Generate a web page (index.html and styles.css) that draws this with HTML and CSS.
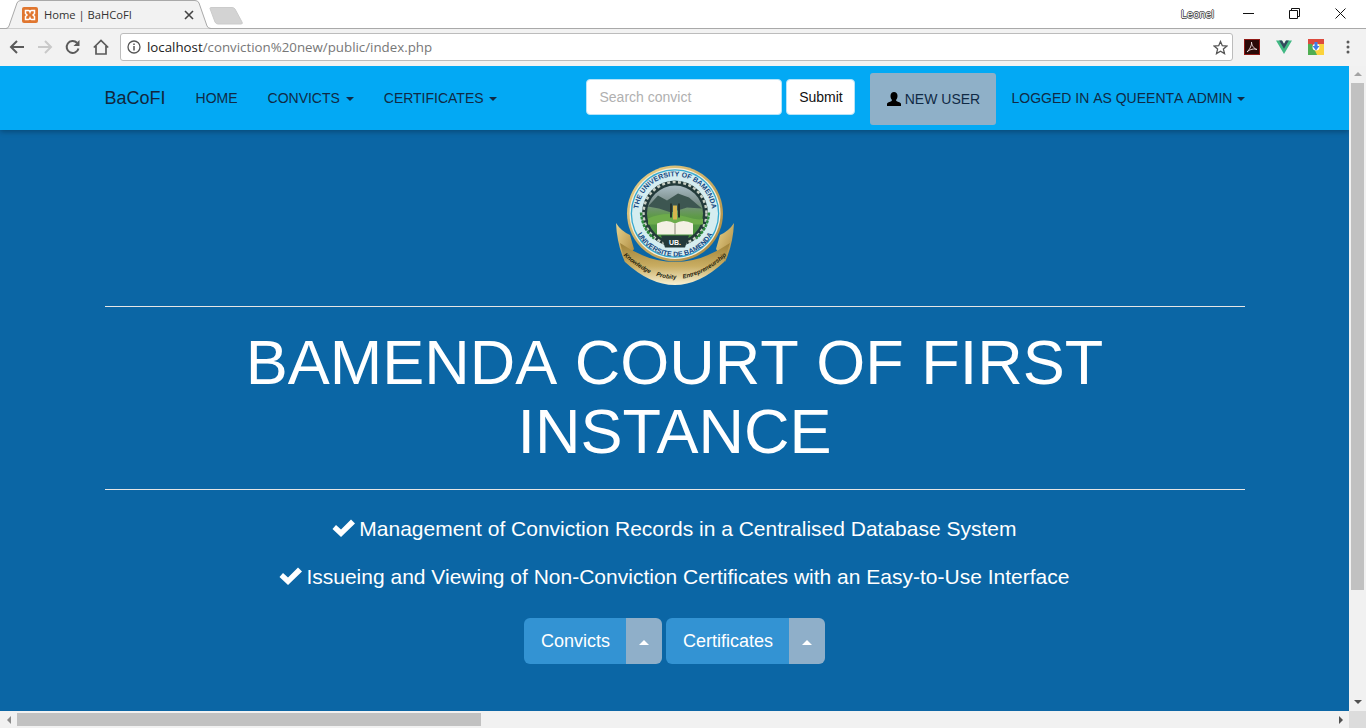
FILE: index.html
```html
<!DOCTYPE html>
<html lang="en">
<head>
  <meta charset="UTF-8" />
  <title>Home | BaHCoFI</title>
  <link rel="stylesheet" href="styles.css">
</head>
<body>
  <!-- Browser tab strip -->
  <div class="tabstrip">
    <div class="tab">
      <svg class="tab-shape" width="212" height="30" viewBox="0 0 212 30">
        <path d="M0 28.500H6Q8 28.500 9 26L17 3Q18 .5 21 .5H195Q198 .5 199 3L207 26Q208 28.500 211 28.500" fill="#f2f2f2" stroke="#a9a9a9"/>
      </svg>
      <svg class="favicon" width="16" height="16" viewBox="0 0 16 16">
        <rect width="16" height="16" rx="2" fill="#e0762f"/>
        <path d="M3.500 3.500H6.500Q7.500 3.500 8 5Q8.500 3.500 9.500 3.500H12.500V6.500L11 8L12.500 9.500V12.500H9.500Q8.500 12.500 8 11Q7.500 12.500 6.500 12.500H3.500V9.500L5 8L3.500 6.500Z" fill="none" stroke="#fff" stroke-width="1.500"/>
      </svg>
      <span class="tab-title">Home | BaHCoFI</span>
      <svg class="tab-close" width="10" height="10" viewBox="0 0 10 10">
        <path d="M1 1L9 9M9 1L1 9" stroke="#444" stroke-width="1.600"/>
      </svg>
    </div>
    <svg class="new-tab" width="36" height="18" viewBox="0 0 36 18">
      <path d="M2 1.500Q2 .5 3 .5H24Q26 .5 27 2L34 15Q35 17 33 17H10Q8 17 7 15Z" fill="#d3d3d3" stroke="#cbcbcb"/>
    </svg>
    <span class="profile">Leonel</span>
    <div class="win-controls">
      <svg width="11" height="11" viewBox="0 0 11 11"><path d="M0 5.500H11" stroke="#111"/></svg>
      <svg width="11" height="11" viewBox="0 0 11 11"><path d="M.5 2.500H8.500V10.500H.5ZM2.500 2.500V.5H10.500V8.500H8.500" fill="none" stroke="#111"/></svg>
      <svg width="11" height="11" viewBox="0 0 11 11"><path d="M.5 .5L10.500 10.500M10.500 .5L.5 10.500" stroke="#111"/></svg>
    </div>
  </div>

  <!-- Browser toolbar -->
  <div class="toolbar">
    <svg class="tool" width="16" height="16" viewBox="0 0 16 16"><path d="M15 8H2.500M8 2L2 8L8 14" fill="none" stroke="#5a5a5a" stroke-width="2"/></svg>
    <svg class="tool" width="16" height="16" viewBox="0 0 16 16"><path d="M1 8H13.500M8 2L14 8L8 14" fill="none" stroke="#c9c9c9" stroke-width="2"/></svg>
    <svg class="tool" width="16" height="16" viewBox="0 0 16 16"><path d="M13.500 9.500A6 6 0 1 1 12 3.800" fill="none" stroke="#5a5a5a" stroke-width="2"/><path d="M14.500 1V7H8.500Z" fill="#5a5a5a"/></svg>
    <svg class="tool" width="16" height="16" viewBox="0 0 16 16"><path d="M.8 8.500L8 1.500L15.200 8.500M3 7V15H13V7" fill="none" stroke="#5a5a5a" stroke-width="1.700"/></svg>
    <div class="omnibox">
      <svg width="14" height="14" viewBox="0 0 14 14"><circle cx="7" cy="7" r="6" fill="none" stroke="#555" stroke-width="1.300"/><path d="M7 6V10.500M7 3.500V5" stroke="#555" stroke-width="1.500"/></svg>
      <span class="url"><b>localhost</b>/conviction%20new/public/index.php</span>
      <svg class="star" width="15" height="15" viewBox="0 0 15 15"><path d="M7.500 1.500L9.300 5.700L13.900 6.100L10.400 9.100L11.500 13.600L7.500 11.200L3.500 13.600L4.600 9.100L1.100 6.100L5.700 5.700Z" fill="none" stroke="#555" stroke-width="1.300"/></svg>
    </div>
    <div class="extensions">
      <svg width="16" height="16" viewBox="0 0 16 16"><rect x=".5" y=".5" width="15" height="15" fill="#2a0a08" stroke="#8f1a16"/><path d="M3 13C6 10 8 6 7.500 3C7.500 6 10 10 13 10.500C10 9.500 6 10 3 13Z" fill="none" stroke="#e8d8d8"/></svg>
      <svg width="16" height="16" viewBox="0 0 16 16"><path d="M0 1.500H6L8 5L10 1.500H16L8 15Z" fill="#41b883"/><path d="M3.200 1.500H6L8 5L10 1.500H12.800L8 9.800Z" fill="#35495e"/></svg>
      <svg width="16" height="16" viewBox="0 0 16 16"><rect width="16" height="16" fill="#fbd33c"/><path d="M0 0H16V5H8L4 12L0 9Z" fill="#dd4b3e"/><path d="M0 5L4 5L9 16H0Z" fill="#4fae52"/><circle cx="8" cy="8" r="3.500" fill="#fff"/><path d="M6.500 3H9.500V7H11.500L8 11.500L4.500 7H6.500Z" fill="#3f7fe8"/></svg>
    </div>
    <svg class="menu-dots" width="4" height="14" viewBox="0 0 4 14"><circle cx="2" cy="2" r="1.500" fill="#5a5a5a"/><circle cx="2" cy="7" r="1.500" fill="#5a5a5a"/><circle cx="2" cy="12" r="1.500" fill="#5a5a5a"/></svg>
  </div>

  <div class="viewport">
    <div class="viewport-row">
      <div class="page">
        <nav class="navbar">
          <div class="container nav-inner">
            <a class="brand">BaCoFI</a>
            <a class="nav-link">HOME</a>
            <a class="nav-link">CONVICTS <span class="caret"></span></a>
            <a class="nav-link">CERTIFICATES <span class="caret"></span></a>
            <form class="search">
              <input class="search-input" type="text" placeholder="Search convict">
              <button class="search-btn" type="button">Submit</button>
            </form>
            <a class="new-user">
              <svg width="14" height="14" viewBox="0 0 14 14"><path d="M0 14V11.800C0 10.500 2.800 9.800 4.600 8.900C5 8.600 5 8 4.700 7.500C3.800 6.500 3.500 5.200 3.500 3.800C3.500 1.300 5 0 7 0C9 0 10.500 1.300 10.500 3.800C10.500 5.200 10.200 6.500 9.300 7.500C9 8 9 8.600 9.400 8.900C11.200 9.800 14 10.500 14 11.800V14Z" fill="#000"/></svg>
              NEW USER
            </a>
            <a class="nav-link user-menu">LOGGED IN AS QUEENTA ADMIN <span class="caret"></span></a>
          </div>
        </nav>

        <main class="container hero">
          <svg class="logo" width="120" height="120" viewBox="0 0 120 120">
            <defs>
              <linearGradient id="gold" x1="0" x2="0" y1="0" y2="1">
                <stop offset="0" stop-color="#a08238"/>
                <stop offset=".55" stop-color="#c9ad62"/>
                <stop offset="1" stop-color="#f7f1d4"/>
              </linearGradient>
              <linearGradient id="goldRim" x1="0" x2="1" y1="0" y2="1">
                <stop offset="0" stop-color="#e9d48e"/>
                <stop offset="1" stop-color="#a9853a"/>
              </linearGradient>
              <linearGradient id="meadow" x1="0" x2="0" y1="0" y2="1">
                <stop offset="0" stop-color="#a9bcc4"/>
                <stop offset=".3" stop-color="#7c8f8c"/>
                <stop offset=".55" stop-color="#5e9a48"/>
                <stop offset="1" stop-color="#3f8f3a"/>
              </linearGradient>
              <path id="arcTop" d="M27 65A37 37 0 1 1 93 65"/>
              <path id="arcBottom" d="M19.500 34A43 43 0 1 0 100.500 34"/>
              <path id="arcMotto" d="M8 90Q60 138 112 90"/>
            </defs>
            <!-- ribbon tails -->
            <path d="M1 58Q6 66 15 70L19 84L10 97Q2 80 1 58Z" fill="url(#goldRim)"/>
            <path d="M119 58Q114 66 105 70L101 84L110 97Q118 80 119 58Z" fill="url(#goldRim)"/>
            <!-- crest rings -->
            <circle cx="60" cy="48.500" r="48" fill="url(#goldRim)"/>
            <circle cx="60" cy="48.500" r="45.500" fill="#f1efe0"/>
            <circle cx="60" cy="48.500" r="44.300" fill="#35a9cf"/>
            <circle cx="60" cy="48.500" r="43" fill="#d5edf0"/>
            <g transform="translate(0 1.500)">
              <circle cx="60" cy="47" r="33" fill="#233a3a"/>
              <circle cx="60" cy="47" r="31.500" fill="none" stroke="#c8cfc4" stroke-width="2.500" stroke-dasharray="3 2.400"/>
              <circle cx="60" cy="47" r="28" fill="url(#meadow)"/>
              <path d="M33 40L43 29L52 34L63 27L74 31L87 42L72 41L56 46L44 42Z" fill="#3d5651"/>
              <path d="M33 52Q50 44 70 50T88 50V58H33Z" fill="#6dac4b"/>
              <!-- laurel -->
              <path d="M26 46Q27 62 39 72" fill="none" stroke="#2e8a3c" stroke-width="2.400" stroke-dasharray="3 1"/>
              <path d="M94 46Q93 62 81 72" fill="none" stroke="#2e8a3c" stroke-width="2.400" stroke-dasharray="3 1"/>
              <!-- torch and book -->
              <rect x="55" y="37" width="2" height="14" fill="#26332c"/>
              <rect x="63" y="37" width="2" height="14" fill="#26332c"/>
              <rect x="58" y="39" width="4" height="14" fill="#d8b64f"/>
              <path d="M42 57Q52 52 60 57Q68 52 78 57V68H42Z" fill="#f4f1e4"/>
              <path d="M60 57V68" stroke="#8a8a78"/>
              <path d="M46 69H74L70 81H50Z" fill="#233a3a"/>
              <text class="logo-ur" x="60" y="78" text-anchor="middle">UB.</text>
            </g>
            <text class="logo-ring"><textPath href="#arcTop" startOffset="50%" text-anchor="middle">THE UNIVERSITY OF BAMENDA</textPath></text>
            <text class="logo-ring"><textPath href="#arcBottom" startOffset="50%" text-anchor="middle">UNIVERSITE DE BAMENDA</textPath></text>
            <!-- motto ribbon -->
            <path d="M5 78Q60 116 115 78L109 97Q60 143 10 97Z" fill="url(#gold)"/>
            <text class="logo-motto"><textPath href="#arcMotto" startOffset="50%" text-anchor="middle">Knowledge Probity Entrepreneurship</textPath></text>
          </svg>
          <hr class="rule">
          <h1 class="title"><span class="title-line">BAMENDA COURT OF FIRST</span> INSTANCE</h1>
          <hr class="rule">
          <p class="feature">
            <svg class="check" width="23" height="18" viewBox="0 0 23 18"><path d="M.5 10L4 6L9 10.500L19 .5L23 4.500L9 18Z" fill="#fff"/></svg>
            Management of Conviction Records in a Centralised Database System
          </p>
          <p class="feature">
            <svg class="check" width="23" height="18" viewBox="0 0 23 18"><path d="M.5 10L4 6L9 10.500L19 .5L23 4.500L9 18Z" fill="#fff"/></svg>
            Issueing and Viewing of Non-Conviction Certificates with an Easy-to-Use Interface
          </p>
          <div class="actions">
            <div class="split">
              <a class="split-main">Convicts</a>
              <a class="split-toggle"><span class="caret-up"></span></a>
            </div>
            <div class="split">
              <a class="split-main">Certificates</a>
              <a class="split-toggle"><span class="caret-up"></span></a>
            </div>
          </div>
        </main>
      </div>

      <div class="vscroll">
        <span class="arrow arrow-up"></span>
        <div class="vscroll-track"><div class="vscroll-thumb"></div></div>
        <span class="arrow arrow-down"></span>
      </div>
    </div>

    <div class="hscroll">
      <span class="hscroll-end"><span class="arrow arrow-left"></span></span>
      <div class="hscroll-thumb"></div>
      <span class="hscroll-end hscroll-right"><span class="arrow arrow-right"></span></span>
      <div class="scroll-corner"></div>
    </div>
  </div>
</body>
</html>
```

FILE: styles.css
```css
* {
  box-sizing: border-box;
}

html, body {
  margin: 0;
  height: 728px;
  overflow: hidden;
}

body {
  font-family: "Liberation Sans", Arial, sans-serif;
  display: flex;
  flex-direction: column;
  background: #fff;
}

/* Browser chrome */
.tabstrip {
  height: 29px;
  flex: none;
  display: flex;
  background: #fff;
  border-bottom: 1px solid #a9a9a9;
  position: relative;
}

.tab {
  width: 212px;
  height: 29px;
  display: flex;
  align-items: center;
  padding: 0 16px 0 22px;
  position: relative;
  flex: none;
}

.tab-shape {
  position: absolute;
  left: 0;
  top: 0;
}

.favicon,
.tab-title,
.tab-close {
  position: relative;
}

.tab-title {
  font-family: "Open Sans", sans-serif;
  font-size: 11.200px;
  color: #333;
  margin-left: 6px;
  flex: 1;
}

.tab-close {
  margin-right: 2px;
}

.new-tab {
  margin: 7px 0 0 -4px;
  flex: none;
}

.profile {
  margin-left: auto;
  margin-top: 8px;
  font-size: 11px;
  line-height: 13px;
  height: 13px;
  color: #fff;
  text-shadow: -.7px 0 #444, .7px 0 #444, 0 -.7px #444, 0 .7px #444;
}

.win-controls {
  display: flex;
  gap: 35px;
  padding: 8px 20px 0 29px;
  align-items: flex-start;
}

.toolbar {
  height: 37px;
  flex: none;
  display: flex;
  align-items: center;
  background: #f2f2f2;
  padding: 0 0 1px 9px;
}

.tool {
  margin-right: 12px;
  flex: none;
}

.omnibox {
  width: 1113px;
  height: 28px;
  margin-left: -1px;
  background: #fff;
  border: 1px solid #bcbcbc;
  border-radius: 3px;
  display: flex;
  align-items: center;
  padding: 0 4px 0 6px;
  flex: none;
}

.url {
  font-family: "Open Sans", sans-serif;
  font-size: 13.300px;
  color: #777;
  margin-left: 6px;
  flex: 1;
}

.url b {
  font-weight: 400;
  color: #222;
}

.extensions {
  display: flex;
  gap: 16px;
  margin-left: 11px;
}

.menu-dots {
  margin-left: 22px;
}

/* Page viewport and scrollbars */
.viewport {
  flex: 1;
  display: flex;
  flex-direction: column;
  min-height: 0;
}

.viewport-row {
  flex: 1;
  display: flex;
  min-height: 0;
}

.page {
  flex: 1;
  background: #0b66a5;
  min-width: 0;
  overflow: hidden;
}

.vscroll {
  width: 17px;
  flex: none;
  background: #f1f1f1;
  display: flex;
  flex-direction: column;
  align-items: center;
}

.vscroll-track {
  flex: 1;
  width: 100%;
  padding: 0 2px 0 2px;
}

.vscroll-thumb {
  height: 507px;
  background: #c1c1c1;
}

.arrow {
  width: 0;
  height: 0;
  flex: none;
  display: block;
  border: 4px solid transparent;
}

.arrow-up {
  border-top-width: 0;
  border-bottom-color: #a3a3a3;
  margin: 6px 0 7px;
}

.arrow-down {
  border-bottom-width: 0;
  border-top-color: #505050;
  margin: 7px 0;
}

.arrow-left {
  border-left-width: 0;
  border-right-color: #8a8a8a;
}

.arrow-right {
  border-right-width: 0;
  border-left-color: #505050;
}

.hscroll {
  height: 17px;
  flex: none;
  background: #f1f1f1;
  display: flex;
}

.hscroll-end {
  width: 17px;
  flex: none;
  display: flex;
  align-items: center;
  justify-content: center;
}

.hscroll-right {
  margin-left: auto;
}

.hscroll-thumb {
  width: 464px;
  margin: 2px 0;
  background: #c1c1c1;
}

.scroll-corner {
  width: 17px;
  flex: none;
  background: #dcdcdc;
}

/* Site layout */
.container {
  width: 1170px;
  margin: 0 auto;
  padding: 0 15px;
}

.navbar {
  height: 64px;
  background: #03a9f4;
  box-shadow: 0 2px 5px rgba(0, 0, 0, .26);
  position: relative;
}

.nav-inner {
  display: flex;
  align-items: center;
  height: 64px;
}

.nav-inner > * {
  flex: none;
  white-space: nowrap;
}

.brand {
  font-size: 18px;
  color: #12263c;
  margin-right: 30px;
}

.nav-link {
  font-size: 14px;
  color: #102a45;
  margin-right: 30px;
}

.caret {
  display: inline-block;
  width: 0;
  height: 0;
  margin-left: 2px;
  vertical-align: middle;
  border-top: 4px solid #102a45;
  border-left: 4px solid transparent;
  border-right: 4px solid transparent;
}

.search {
  display: flex;
  gap: 4px;
  margin: 0 15px 0 59px;
  position: relative;
  top: -1px;
}

.search-input {
  width: 196px;
  height: 36px;
  border: 1px solid #b5e3f8;
  border-radius: 4px;
  padding: 6px 12px;
  font-family: inherit;
  font-size: 14px;
  background: #fff;
}

.search-input::placeholder {
  color: #b0b0b0;
}

.search-btn {
  width: 69px;
  height: 36px;
  border: 1px solid #b5e3f8;
  border-radius: 4px;
  background: #fff;
  font-family: inherit;
  font-size: 14px;
  color: #111;
  padding: 0;
}

.new-user {
  width: 126px;
  height: 52px;
  margin: 2px 15px 0 0;
  background: #8fb0c8;
  border-radius: 3px;
  display: flex;
  align-items: center;
  justify-content: center;
  gap: 4px;
  font-size: 14px;
  color: #102a45;
}

.user-menu {
  margin-right: 0;
  font-kerning: none;
}

.user-menu .caret {
  margin-left: 1px;
}

.hero {
  text-align: center;
  color: #fff;
  padding-top: 35px;
}

.logo {
  display: block;
  margin: 0 auto;
}

.logo-ring {
  font-size: 7px;
  font-weight: 700;
  fill: #17477f;
}

.logo-ur {
  font-size: 7px;
  font-weight: 700;
  fill: #fff;
}

.logo-motto {
  font-size: 6px;
  font-weight: 700;
  font-style: italic;
  word-spacing: 5px;
  fill: #221c0d;
}

.rule {
  border: 0;
  border-top: 1px solid #e6e6e6;
  margin: 21px 0 0;
}

.title {
  font-size: 63px;
  font-weight: 400;
  line-height: 69.300px;
  margin: 21px 0 22px;
}

.title-line {
  font-kerning: none;
}

.feature {
  font-size: 21px;
  line-height: 30px;
  margin: 0 0 18px;
}

.hero .title + .rule + .feature {
  margin-top: 24px;
}

.check {
  vertical-align: -1px;
  margin: 0 -1px;
}

.actions {
  display: flex;
  justify-content: center;
  gap: 4px;
  margin-top: 26px;
}

.split {
  display: flex;
  height: 46px;
  font-size: 18px;
}

.split-main {
  background: #3393d3;
  border-radius: 6px 0 0 6px;
  padding: 1px 16px 0 17px;
  display: flex;
  align-items: center;
}

.split-toggle {
  width: 36px;
  background: #8fafc9;
  border-radius: 0 6px 6px 0;
  display: flex;
  align-items: center;
  justify-content: center;
}

.caret-up {
  width: 0;
  height: 0;
  margin-top: 4px;
  border-bottom: 5px solid #fff;
  border-left: 5px solid transparent;
  border-right: 5px solid transparent;
}
```
